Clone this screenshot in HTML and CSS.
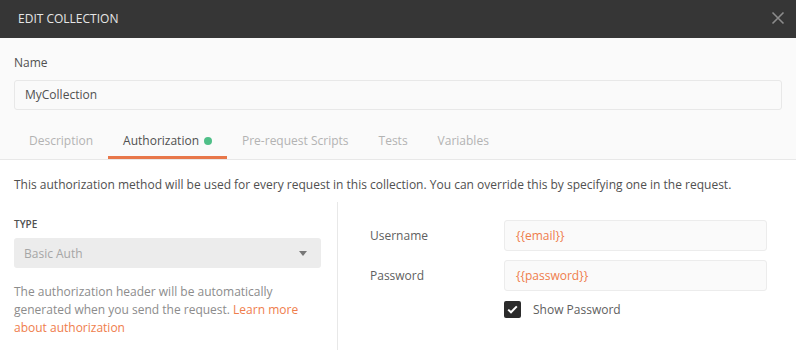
FILE: index.html
```html
<!DOCTYPE html>
<html>
<head>
<meta charset="utf-8">
<title>Edit Collection</title>
<link rel="stylesheet" href="styles.css">
</head>
<body>
<div id="modal">
	<div class="modal-header">
		<div class="modal-title">EDIT COLLECTION</div>
		<div class="close-btn">
			<svg width="14" height="14" viewBox="0 0 14 14"><path d="M1.5 1.5 L12.5 12.5 M12.5 1.5 L1.5 12.5" stroke="#8c8c8c" stroke-width="1.6" fill="none"/></svg>
		</div>
	</div>
	<div class="name-group">
		<div class="field-label">Name</div>
		<div class="text-input">MyCollection</div>
	</div>
	<div class="tabs">
		<div class="tab">Description</div>
		<div class="tab active">Authorization <span class="dot"></span></div>
		<div class="tab">Pre-request Scripts</div>
		<div class="tab">Tests</div>
		<div class="tab">Variables</div>
	</div>
	<div class="tab-body">
		<div class="intro">This authorization method will be used for every request in this collection. You can override this by specifying one in the request.</div>
		<div class="auth-split">
			<div class="auth-left">
				<div class="type-label">TYPE</div>
				<div class="select">
					<span>Basic Auth</span>
					<span class="caret"></span>
				</div>
				<div class="help">The authorization header will be automatically generated when you send the request. <a href="#">Learn more about authorization</a></div>
			</div>
			<div class="auth-right">
				<div class="row">
					<div class="row-label">Username</div>
					<div class="var-input">{{email}}</div>
				</div>
				<div class="row">
					<div class="row-label">Password</div>
					<div class="var-input">{{password}}</div>
				</div>
				<div class="row check-row">
					<div class="row-label"></div>
					<span class="checkbox">
						<svg width="11" height="9" viewBox="0 0 11 9"><path d="M1.2 4.6 L4 7.3 L9.8 1.4" stroke="#fff" stroke-width="2" fill="none"/></svg>
					</span>
					<span class="check-text">Show Password</span>
				</div>
			</div>
		</div>
	</div>
</div>
</body>
</html>
```

FILE: styles.css
```css
html, body {
	margin: 0px;
	padding: 0px;
}
body {
	font-family: "Open Sans", "Noto Sans", sans-serif;
	font-size: 12px;
	color: #505050;
	background: #fff;
}
#modal {
	width: 796px;
	height: 350px;
	overflow: hidden;
	background: #fafafa;
}
.modal-header {
	height: 38px;
	background: #363636;
	display: flex;
	align-items: center;
	justify-content: space-between;
	padding: 0px 11px 0px 18px;
}
.modal-title {
	color: #e6e6e6;
	font-size: 12px;
	line-height: 16px;
	margin-top: -1px;
}
.close-btn {
	display: flex;
	margin-top: -2px;
}
.name-group {
	padding: 17px 14px 0px 14px;
}
.field-label {
	line-height: 16px;
	margin-bottom: 9px;
}
.text-input {
	height: 28px;
	line-height: 28px;
	padding: 0px 10px;
	border: 1px solid #e8e8e8;
	border-radius: 3px;
	background: #fafafa;
}
.tabs {
	display: flex;
	margin-top: 12px;
	padding: 0px 14px;
	border-bottom: 1px solid #e8e8e8;
}
.tab {
	padding: 11px 15px 7px 15px;
	line-height: 16px;
	color: #b3b3b3;
	border-bottom: 3px solid transparent;
	display: flex;
	align-items: center;
}
.tab.active {
	color: #505050;
	border-bottom-color: #e8774a;
}
.dot {
	display: inline-block;
	width: 8px;
	height: 8px;
	border-radius: 50%;
	background: #4fbf88;
	margin-left: 5px;
}
.tab-body {
	background: #fff;
	height: 190px;
}
.intro {
	padding: 17px 14px 0px 14px;
	line-height: 16px;
}
.auth-split {
	display: flex;
	margin-top: 9px;
	height: 160px;
}
.auth-left {
	width: 307px;
	padding: 15px 16px 0px 14px;
	border-right: 1px solid #e8e8e8;
}
.type-label {
	font-size: 10px;
	font-weight: 600;
	line-height: 14px;
	color: #505050;
	margin-bottom: 7px;
}
.select {
	height: 30px;
	background: #ececec;
	border-radius: 3px;
	display: flex;
	align-items: center;
	justify-content: space-between;
	padding: 0px 14px 0px 10px;
	color: #a6a6a6;
}
.caret {
	width: 0px;
	height: 0px;
	border-left: 4px solid transparent;
	border-right: 4px solid transparent;
	border-top: 5px solid #777;
}
.help {
	margin-top: 15px;
	line-height: 18px;
	color: #8c8c8c;
}
.help a {
	color: #ef7d4c;
	text-decoration: none;
}
.auth-right {
	flex: 1;
	padding: 18px 29px 0px 32px;
}
.row {
	display: flex;
	align-items: center;
	margin-bottom: 9px;
}
.row-label {
	width: 134px;
	flex: none;
	color: #606060;
}
.var-input {
	flex: 1;
	height: 29px;
	line-height: 29px;
	padding: 0px 11px;
	border: 1px solid #ececec;
	border-radius: 3px;
	background: #fafafa;
	color: #ef7d4c;
}
.check-row {
	margin-top: 10px;
}
.checkbox {
	width: 17px;
	height: 17px;
	border-radius: 2px;
	background: #2b2b2b;
	display: flex;
	align-items: center;
	justify-content: center;
}
.check-text {
	margin-left: 12px;
	color: #606060;
}
```
